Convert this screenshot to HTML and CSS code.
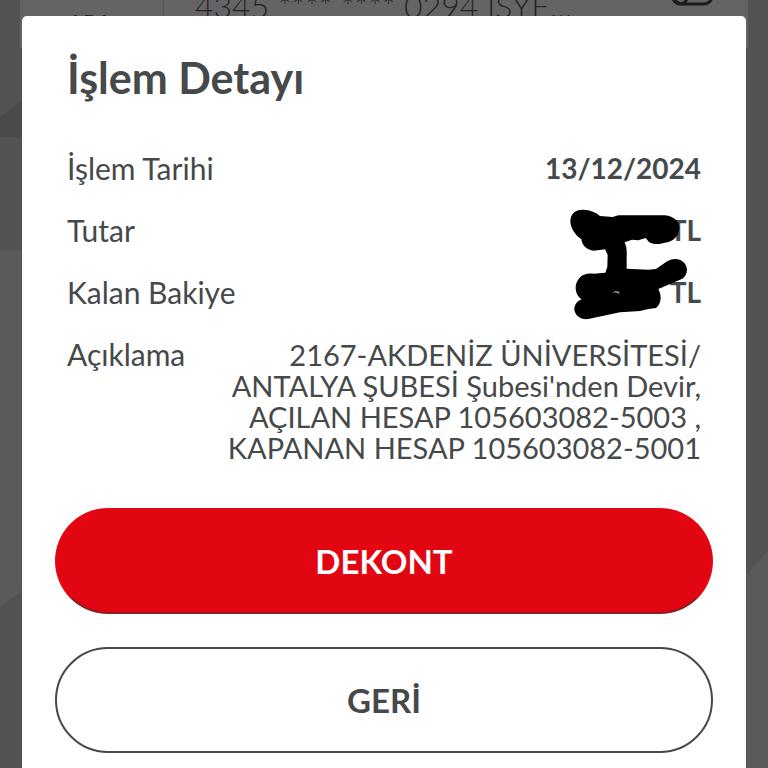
FILE: index.html
```html
<!DOCTYPE html>
<html lang="tr">
<head>
<meta charset="utf-8">
<meta name="viewport" content="width=device-width, initial-scale=1">
<title>İşlem Detayı</title>
<link rel="stylesheet" href="styles.css">
</head>
<body>
<div class="screen">
  <svg class="pattern" viewBox="0 0 768 768" preserveAspectRatio="none" aria-hidden="true">
    <path fill="#4a4b4b" d="M0 117 22 100V137H0z"/>
    <path fill="#595a5a" d="M0 250H22V590L0 606z"/>
    <path fill="#595a5a" d="M746 574 768 550V768H746z"/>
  </svg>
  <header class="account">
    <span class="account-tag">ARA</span>
    <span class="account-name">4345 **** **** 0294 İŞYE...</span>
    <svg class="account-icon" width="42" height="28" viewBox="0 0 42 28" fill="none" stroke="#1c1c1c" stroke-width="3" aria-hidden="true">
      <rect x="2" y="1" width="38" height="25" rx="8"/>
      <circle cx="8" cy="19" r="7"/>
    </svg>
  </header>
  <main class="dialog" role="dialog" aria-labelledby="title">
    <h1 class="title" id="title">İşlem Detayı</h1>
    <div class="summary">
      <dl class="details">
        <div class="row"><dt>İşlem Tarihi</dt><dd class="strong">13/12/2024</dd></div>
        <div class="row"><dt>Tutar</dt><dd class="strong">TL</dd></div>
        <div class="row"><dt>Kalan Bakiye</dt><dd class="strong">TL</dd></div>
        <div class="row"><dt>Açıklama</dt><dd>2167-AKDENİZ ÜNİVERSİTESİ/<br>ANTALYA ŞUBESİ Şubesi'nden Devir,<br>AÇILAN HESAP 105603082-5003 ,<br>KAPANAN HESAP 105603082-5001</dd></div>
      </dl>
      <svg class="scribble" width="180" height="150" viewBox="0 0 540 450" aria-hidden="true">
        <path d="M91 95C91 70 107 58 130 59C151 60 168 67 180 78L218 81L235 76L375 76C402 79 418 94 418 114C416 139 399 156 374 158C358 164 337 164 326 155L317 144L295 151L276 149L254 157Q262 174 260 196L260 236L325 239L348 237L378 216C397 203 420 204 433 219C446 235 442 255 427 266L355 297C366 317 364 343 348 354L325 357L300 363L240 367L145 387C122 390 106 377 103 360C102 345 112 333 125 328C105 315 101 286 116 267C127 253 142 250 161 251L196 248L202 230L203 195L195 178L161 182C139 180 126 165 124 148C105 134 93 116 91 95Z"/>
        <path d="M217 309 225 303 237 305 239 311 226 307Z" fill="#aaa"/>
      </svg>
    </div>
    <div class="actions">
      <button class="button primary" type="button">DEKONT</button>
      <button class="button secondary" type="button">GERİ</button>
    </div>
  </main>
</div>
</body>
</html>
```
FILE: styles.css
```css
* { box-sizing: border-box; }

body {
  margin: 0;
  background: #525354;
  color: #45494a;
  font-family: Lato, "Open Sans", sans-serif;
}

.screen {
  position: relative;
  min-height: 100vh;
  padding: 16px 22px 0;
  overflow: hidden;
}

.pattern {
  position: absolute;
  inset: 0;
  width: 100%;
  height: 100%;
}

/* Card behind the dialog, mostly hidden by it */
.account {
  position: absolute;
  top: -12px;
  left: 20px;
  right: 20px;
  height: 60px;
  display: flex;
  align-items: flex-start;
  background: #646464;
  color: #262626;
}

.account-tag {
  width: 144px;
  height: 60px;
  padding: 20px 0 0 48px;
  border-right: 1px solid #585858;
  font-size: 22px;
  line-height: 28px;
}

.account-name {
  flex: 1;
  padding-left: 31px;
  font-size: 32px;
  line-height: 36px;
  font-weight: 300;
}

.account-icon {
  flex: none;
  margin: -10px 34px 0 0;
}

.dialog {
  position: relative;
  min-height: calc(100vh - 16px);
  padding: 36px 33px 16px;
  background: #fff;
  border-radius: 5px 5px 0 0;
}

.title {
  margin: 0 12px 49px;
  font-size: 43px;
  line-height: 52px;
  font-weight: 700;
}

.summary {
  position: relative;
  margin: 0 12px 45px;
}

.details {
  display: grid;
  gap: 31px;
  margin: 0;
  font-size: 30px;
  line-height: 31px;
}

.row {
  display: flex;
  justify-content: space-between;
}

.row dd {
  margin: 0;
  font-size: 29px;
  text-align: right;
}

.row .strong {
  font-size: 28px;
  font-weight: 700;
}

.scribble {
  position: absolute;
  top: 37px;
  right: -19px;
}

.actions {
  display: grid;
  gap: 33px;
}

.button {
  height: 106px;
  border: 2px solid #45494a;
  border-radius: 53px;
  background: #fff;
  color: #45494a;
  font: 700 33px/44px Lato, "Open Sans", sans-serif;
}

.primary {
  border-color: #e20613;
  border-bottom-color: #8a2026;
  background: #e20613;
  color: #fff;
}
```
